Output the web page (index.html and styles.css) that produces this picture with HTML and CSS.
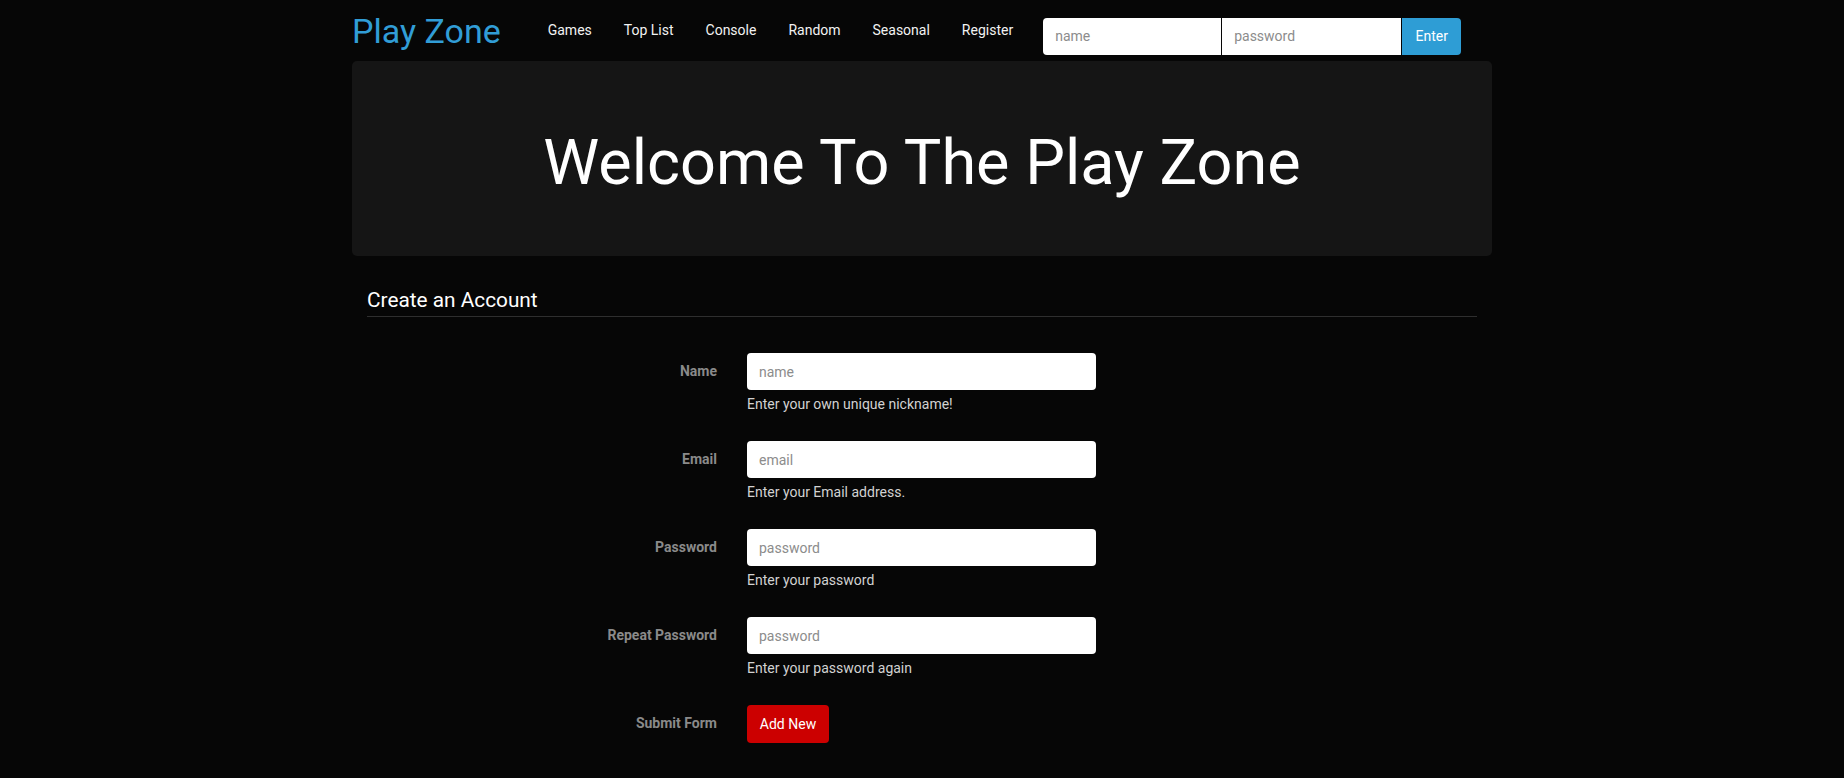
FILE: index.html
```html
<!DOCTYPE html>
<html lang="en">
<head>
<meta charset="utf-8">
<title>Play Zone</title>
<link rel="stylesheet" href="styles.css">
</head>
<body>
<div class="container">
  <header class="topbar">
    <a class="brand" href="#">Play Zone</a>
    <nav class="nav">
      <a class="nav-link" href="#">Games</a>
      <a class="nav-link" href="#">Top List</a>
      <a class="nav-link" href="#">Console</a>
      <a class="nav-link" href="#">Random</a>
      <a class="nav-link" href="#">Seasonal</a>
      <a class="nav-link" href="#">Register</a>
    </nav>
    <form class="login">
      <input class="login-input first" type="text" placeholder="name">
      <input class="login-input" type="password" placeholder="password">
      <button class="login-btn" type="button">Enter</button>
    </form>
  </header>

  <section class="jumbotron">
    <h1 class="jumbo-title">Welcome To The Play Zone</h1>
  </section>

  <section class="account">
    <h2 class="section-title">Create an Account</h2>
    <form class="reg-form">
      <div class="reg-row">
        <label class="reg-label">Name</label>
        <div class="reg-field">
          <input class="reg-input" type="text" placeholder="name">
          <small class="reg-help">Enter your own unique nickname!</small>
        </div>
      </div>
      <div class="reg-row">
        <label class="reg-label">Email</label>
        <div class="reg-field">
          <input class="reg-input" type="email" placeholder="email">
          <small class="reg-help">Enter your Email address.</small>
        </div>
      </div>
      <div class="reg-row">
        <label class="reg-label">Password</label>
        <div class="reg-field">
          <input class="reg-input" type="password" placeholder="password">
          <small class="reg-help">Enter your password</small>
        </div>
      </div>
      <div class="reg-row">
        <label class="reg-label">Repeat Password</label>
        <div class="reg-field">
          <input class="reg-input" type="password" placeholder="password">
          <small class="reg-help">Enter your password again</small>
        </div>
      </div>
      <div class="reg-row">
        <label class="reg-label">Submit Form</label>
        <div class="reg-field">
          <button class="add-btn" type="button">Add New</button>
        </div>
      </div>
    </form>
  </section>
</div>
</body>
</html>
```

FILE: styles.css
```css
* {
  box-sizing: border-box;
}

html, body {
  margin: 0;
  padding: 0;
}

body {
  background: #060606;
  color: #ffffff;
  font-family: Roboto, "Liberation Sans", Arial, sans-serif;
  font-size: 14px;
}

.container {
  width: 1140px;
  margin: 0 auto;
}

/* ---------- top bar ---------- */
.topbar {
  height: 61px;
  display: flex;
  align-items: center;
}

.brand {
  font-size: 34px;
  line-height: 34px;
  color: #319dd6;
  text-decoration: none;
  margin-right: 31px;
}

.nav {
  display: flex;
  align-items: center;
}

.nav-link {
  color: #f2f2f2;
  text-decoration: none;
  font-size: 14px;
  font-weight: 400;
  line-height: 21px;
  padding: 0 16px;
}

.login {
  display: flex;
  gap: 1px;
  margin: 11px 0 0 14px;
}

.login-input {
  width: 179px;
  height: 37px;
  border: none;
  background: #ffffff;
  font-family: Roboto, "Liberation Sans", Arial, sans-serif;
  font-size: 14px;
  padding: 0 12px;
  color: #333;
  outline: none;
}

.login-input.first {
  width: 178px;
  border-radius: 4px 0 0 4px;
}

.login-input::placeholder,
.reg-input::placeholder {
  color: #8c8c8c;
}

.login-btn {
  width: 59px;
  height: 37px;
  border: none;
  background: #2e9dd5;
  color: #ffffff;
  font-family: Roboto, "Liberation Sans", Arial, sans-serif;
  font-size: 14px;
  border-radius: 0 4px 4px 0;
  padding: 0;
}

/* ---------- jumbotron ---------- */
.jumbotron {
  background: #151515;
  border-radius: 5px;
  padding: 64px 0 55px;
  text-align: center;
}

.jumbo-title {
  margin: 0;
  font-size: 63px;
  line-height: 76px;
  font-weight: 400;
  color: #ffffff;
}

/* ---------- account form ---------- */
.account {
  padding: 32px 15px 0;
}

.section-title {
  margin: 0;
  font-size: 20.8px;
  line-height: 25px;
  font-weight: 400;
  padding-bottom: 3px;
  border-bottom: 1px solid #2e2e2e;
}

.reg-form {
  padding-top: 36px;
}

.reg-row {
  display: grid;
  grid-template-columns: 350px 350px;
  column-gap: 30px;
  margin-bottom: 26px;
}

.reg-label {
  height: 36px;
  display: flex;
  align-items: center;
  justify-content: flex-end;
  font-weight: 700;
  font-size: 14px;
  color: #8a8a8a;
}

.reg-field {
  display: flex;
  flex-direction: column;
  align-items: flex-start;
}

.reg-input {
  width: 349px;
  height: 37px;
  border: none;
  border-radius: 4px;
  background: #ffffff;
  font-family: Roboto, "Liberation Sans", Arial, sans-serif;
  font-size: 14px;
  padding: 0 12px;
  color: #333;
  outline: none;
}

.reg-help {
  margin-top: 4px;
  font-size: 14px;
  line-height: 21px;
  color: #d2d2d2;
}

.add-btn {
  height: 38px;
  width: 82px;
  border: none;
  border-radius: 4px;
  background: #cc0000;
  color: #ffffff;
  font-family: Roboto, "Liberation Sans", Arial, sans-serif;
  font-size: 14px;
  padding: 0;
}
```
